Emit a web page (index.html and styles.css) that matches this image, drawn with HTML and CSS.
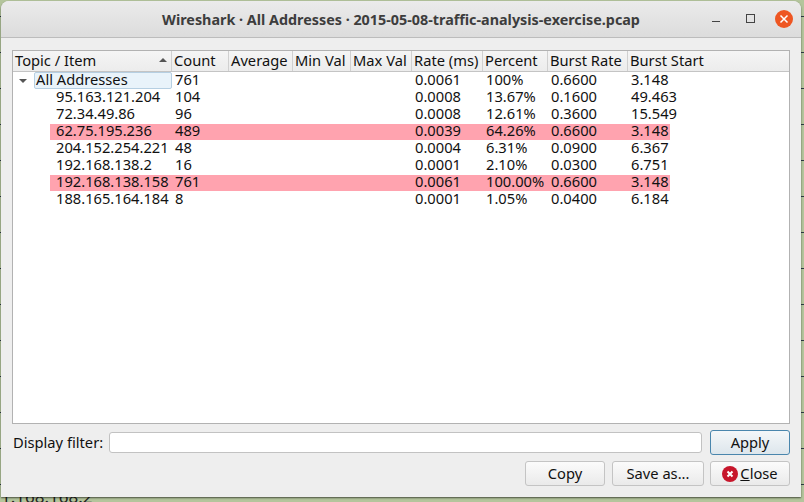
FILE: index.html
```html
<!DOCTYPE html>
<html lang="en">
<head>
  <meta charset="UTF-8">
  <meta name="viewport" content="width=device-width, initial-scale=1.0">
  <title>Wireshark - All Addresses</title>
  <link rel="stylesheet" href="styles.css">
</head>
<body>
  <div class="window">
    <!-- Title bar -->
    <header class="titlebar">
      <span class="title">Wireshark · All Addresses · 2015-05-08-traffic-analysis-exercise.pcap</span>
      <div class="controls">
        <span class="min-btn"></span>
        <span class="max-btn"></span>
        <svg class="close-btn" width="18" height="18" viewBox="0 0 18 18">
          <circle cx="9" cy="9" r="9" fill="#ee5622"/>
          <path d="M5.5 5.5l7 7M12.500 5.500l-7 7" stroke="#fff" stroke-width="1.500" fill="none"/>
        </svg>
      </div>
    </header>

    <div class="content">
      <!-- Stats tree -->
      <div class="tree">
        <div class="tree-head">
          <div class="head-cell head-topic">Topic / Item <span class="sort-arrow"></span></div>
          <div class="head-cell">Count</div>
          <div class="head-cell">Average</div>
          <div class="head-cell">Min Val</div>
          <div class="head-cell">Max Val</div>
          <div class="head-cell">Rate (ms)</div>
          <div class="head-cell">Percent</div>
          <div class="head-cell">Burst Rate</div>
          <div class="head-cell">Burst Start</div>
        </div>

        <div class="row row-root">
          <div class="root-cell"><span class="expander"></span><span class="root-label">All Addresses</span></div>
          <div>761</div><div></div><div></div><div></div><div>0.0061</div><div>100%</div><div>0.6600</div><div>3.148</div>
        </div>
        <div class="row row-child">
          <div class="item">95.163.121.204</div>
          <div>104</div><div></div><div></div><div></div><div>0.0008</div><div>13.67%</div><div>0.1600</div><div>49.463</div>
        </div>
        <div class="row row-child">
          <div class="item">72.34.49.86</div>
          <div>96</div><div></div><div></div><div></div><div>0.0008</div><div>12.61%</div><div>0.3600</div><div>15.549</div>
        </div>
        <div class="row row-child row-hot">
          <div class="item">62.75.195.236</div>
          <div>489</div><div></div><div></div><div></div><div>0.0039</div><div>64.26%</div><div>0.6600</div><div>3.148</div>
        </div>
        <div class="row row-child">
          <div class="item">204.152.254.221</div>
          <div>48</div><div></div><div></div><div></div><div>0.0004</div><div>6.31%</div><div>0.0900</div><div>6.367</div>
        </div>
        <div class="row row-child">
          <div class="item">192.168.138.2</div>
          <div>16</div><div></div><div></div><div></div><div>0.0001</div><div>2.10%</div><div>0.0300</div><div>6.751</div>
        </div>
        <div class="row row-child row-hot">
          <div class="item">192.168.138.158</div>
          <div>761</div><div></div><div></div><div></div><div>0.0061</div><div>100.00%</div><div>0.6600</div><div>3.148</div>
        </div>
        <div class="row row-child">
          <div class="item">188.165.164.184</div>
          <div>8</div><div></div><div></div><div></div><div>0.0001</div><div>1.05%</div><div>0.0400</div><div>6.184</div>
        </div>
      </div>

      <!-- Display filter -->
      <div class="filter-row">
        <label class="filter-label" for="displayFilter">Display filter:</label>
        <input class="filter-input" type="text" id="displayFilter">
        <button class="btn btn-apply" type="button">Apply</button>
      </div>

      <!-- Dialog buttons -->
      <div class="button-row">
        <button class="btn btn-copy" type="button">Copy</button>
        <button class="btn btn-save" type="button">Save as...</button>
        <button class="btn" type="button">
          <svg class="close-icon" width="16" height="16" viewBox="0 0 16 16">
            <circle cx="8" cy="8" r="8" fill="#c7162b"/>
            <path d="M5.500 5.500l5 5M10.500 5.500l-5 5" stroke="#fff" stroke-width="2" fill="none"/>
          </svg><span><u>C</u>lose</span>
        </button>
      </div>
    </div>
  </div>
  <div class="desktop-text">1.168.168.2</div>
</body>
</html>
```

FILE: styles.css
```css
html, body {
  height: 100%;
}

body {
  margin: 0;
  overflow: hidden;
  /* desktop behind the dialog: green wallpaper with lines of other windows' text */
  background:
    repeating-linear-gradient(#b4c59c 0, #b4c59c 16px, #2c3a44 16px, #2c3a44 17px, #b4c59c 17px, #b4c59c 36px);
  font-family: "Noto Sans", sans-serif;
  font-size: 14.7px;
  color: #111;
}

.window {
  width: 800px;
  height: 496px;
  margin: 1px 0 0 1px;
  background-color: #eeeeee;
  border-radius: 8px 8px 0 0;
  box-shadow: 0 1px 2px rgba(0, 0, 0, 0.6);
  display: flex;
  flex-direction: column;
}

.titlebar {
  height: 36px;
  flex: none;
  display: flex;
  align-items: center;
  justify-content: center;
  background: linear-gradient(#ebebeb, #dcdcdc);
  border-bottom: 1px solid #bcbcbc;
  border-radius: 8px 8px 0 0;
  position: relative;
}

.title {
  font-weight: 700;
  font-size: 14.35px;
  color: #3d3d3d;
}

.controls {
  position: absolute;
  right: 8px;
  top: 9px;
  display: flex;
  align-items: center;
}

.min-btn {
  width: 8px;
  height: 1px;
  background-color: #444;
  margin-top: 4px;
  margin-right: 26px;
}

.max-btn {
  width: 7px;
  height: 7px;
  border: 1px solid #444;
  margin-top: -2px;
  margin-right: 20px;
}

.content {
  flex: 1;
  display: flex;
  flex-direction: column;
  padding: 12px 11px 8px 11px;
}

.tree {
  height: 374px;
  background-color: #fff;
  border: 1px solid #b2b2b2;
  box-sizing: border-box;
}

.tree-head, .row-root {
  display: grid;
  grid-template-columns: 159px 57px 64px 58px 61px 71px 65px 80px 1fr;
}

.tree-head {
  height: 20px;
  line-height: 18px;
  border-bottom: 1px solid #c4c4c4;
  background: linear-gradient(#f5f5f5, #ececec);
}

.head-cell {
  border-right: 1px solid #d0d0d0;
  padding-left: 2px;
  white-space: nowrap;
  overflow: hidden;
}

.head-cell:last-child {
  border-right: none;
}

.head-topic {
  position: relative;
}

.sort-arrow {
  position: absolute;
  right: 4px;
  top: 7px;
  border-left: 4px solid transparent;
  border-right: 4px solid transparent;
  border-bottom: 4px solid #555;
}

.row {
  height: 17px;
  line-height: 15px;
  white-space: nowrap;
}

.row > div {
  padding-left: 3px;
}

.row-child {
  display: grid;
  grid-template-columns: 122px 57px 64px 58px 61px 71px 65px 80px 1fr;
  margin-left: 37px;
  width: 620px;
}

.row > .root-cell {
  padding-left: 0;
  display: flex;
  align-items: center;
}

.expander {
  margin: 0 7px 0 6px;
  border-left: 4px solid transparent;
  border-right: 4px solid transparent;
  border-top: 4px solid #555;
}

.root-label {
  flex: 1;
  height: 17px;
  line-height: 13px;
  padding-left: 1px;
  background-color: #e9f3fa;
  border: 1px solid #b6cfe2;
  border-radius: 2px;
  box-sizing: border-box;
}

.row > .item {
  padding-left: 6px;
}

.row-hot {
  background-color: #ffa3af;
  box-shadow: inset 0 1px 0 #fff;
}

.filter-row {
  display: flex;
  align-items: center;
  margin-top: 6px;
  height: 25px;
}

.filter-label {
  width: 96px;
  padding: 0 0 1px 1px;
  flex: none;
}

.filter-input {
  flex: 1;
  height: 21px;
  padding: 0;
  box-sizing: border-box;
  border: 1px solid #c2c2c2;
  border-radius: 3px;
  background-color: #fff;
}

.btn {
  width: 80px;
  height: 25px;
  padding: 0 0 2px;
  box-sizing: border-box;
  font: inherit;
  color: #111;
  background: linear-gradient(#fbfbfb, #eaeaea);
  border: 1px solid #c4c4c4;
  border-radius: 3px;
  display: flex;
  align-items: center;
  justify-content: center;
}

.btn-apply {
  margin-left: 8px;
  background: linear-gradient(#f4f7f9, #dde6ec);
  border-color: #4a86ad;
}

.btn-copy {
  margin-right: 1px;
}

.btn-save {
  width: 92px;
}

.button-row {
  display: flex;
  justify-content: flex-end;
  gap: 6px;
  margin-top: 6px;
}

.close-icon {
  margin: 2px 2px 0 0;
}

.desktop-text {
  position: absolute;
  left: 1px;
  top: 485px;
  font-size: 17px;
  color: #222;
  z-index: -1;
}
```
